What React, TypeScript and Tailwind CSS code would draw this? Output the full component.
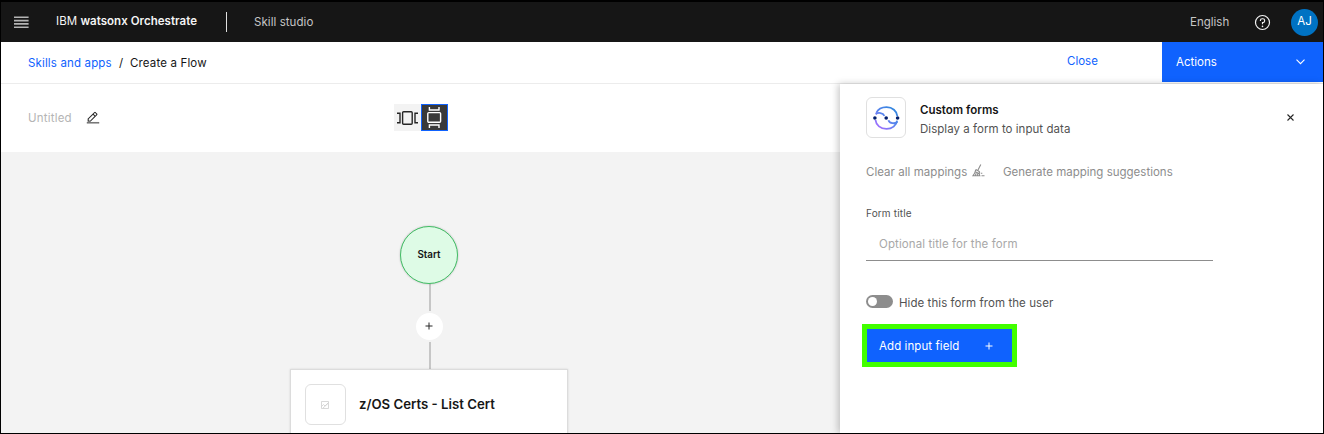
import type { ReactNode } from "react";

function Label({ className, children }: { className: string; children: ReactNode }) {
  return <span className={`block shrink-0 whitespace-nowrap leading-4 ${className}`}>{children}</span>;
}

function MenuIcon() {
  return (
    <svg className="shrink-0" width="15" height="13" viewBox="0 0 15 13" fill="none" stroke="#b4b4b4" strokeWidth="1.6">
      <path d="M0 1.3H14.6M0 4.6H14.6M0 7.9H14.6M0 11.2H14.6" />
    </svg>
  );
}

function EditIcon() {
  return (
    <svg className="shrink-0" width="14" height="14" viewBox="0 0 32 32" fill="#161616">
      <path d="M2 26h28v2H2zM25.4 9c.8-.8.8-2 0-2.8l-3.6-3.6c-.8-.8-2-.8-2.8 0l-15 15V24h6.4l15-15zM20.4 4L24 7.6l-3 3L17.4 7l3-3zM6 22v-3.6l10-10 3.6 3.6-10 10H6z" stroke="#161616" strokeWidth=".3" />
    </svg>
  );
}

function HelpIcon() {
  return (
    <svg className="shrink-0" width="17" height="17" viewBox="0 0 32 32" fill="none" stroke="#f4f4f4" strokeWidth="2.2">
      <circle cx="16" cy="16" r="13.2" />
      <path d="M12 13v-.5A3.5 3.5 0 0 1 15.5 9h1a3.6 3.6 0 0 1 0 7.2H16V19.4" />
      <circle cx="16" cy="23.3" r="1.5" fill="#f4f4f4" stroke="none" />
    </svg>
  );
}

function PlusIcon({ className }: { className: string }) {
  return (
    <svg className={className} width="8" height="8" viewBox="0 0 8 8" fill="none" stroke="currentColor">
      <path d="M4 .5v7M.5 4h7" />
    </svg>
  );
}

function FormLogo() {
  return (
    <svg className="shrink-0" width="27" height="24" viewBox="0 0 27 24" fill="none">
      <defs>
        <linearGradient id="swirl" x1="22" y1="2" x2="5" y2="22" gradientUnits="userSpaceOnUse">
          <stop offset="0" stopColor="#2f86dc" />
          <stop offset=".5" stopColor="#5a84ee" />
          <stop offset="1" stopColor="#a56eff" />
        </linearGradient>
      </defs>
      <g stroke="url(#swirl)" strokeWidth="1.8">
        <path d="M3.3 6.8C5 3.200 9 1.100 13.500 1.100c6 0 10.300 4 10.800 8.900" />
        <path d="M2.500 14c.5 5 5 8.900 11 8.900 5.500 0 10-3.400 10.600-8.300" />
        <path d="M2.600 8.200c2.400-2 7.400-1.600 8.800 1.600" />
        <path d="M24.400 15.600c-2.400 2.600-7.900 2-9-1.400" />
      </g>
      <g fill="#001d6c">
        <circle cx="1.900" cy="12" r="1.800" />
        <circle cx="13.200" cy="12" r="1.800" />
        <circle cx="24.600" cy="12" r="1.800" />
      </g>
    </svg>
  );
}

function BroomIcon() {
  return (
    <svg className="shrink-0" width="13" height="13" viewBox="0 0 13 13" fill="none" stroke="#8d8d8d" strokeWidth="1.1">
      <path d="M8.800.600 6 6M3.800 5.600l3.900 2.200M3.800 5.600C3.300 8.200 2.300 10.200.9 11.800h6.900C7.200 10.500 7.200 9 7.700 7.800M3.300 11.500l1-2.200M5.500 11.500l.3-2M3.700 8l3.300 1.600M8.800 9.300h1.500M9.500 11.800h3" />
    </svg>
  );
}

function Header() {
  return (
    <header className="flex h-10 shrink-0 items-center bg-[#161616] pl-[13px] pr-[5px] text-[#f4f4f4]">
      <MenuIcon />
      <Label className="-mt-0.5 ml-[27px] w-[170px] text-[11.5px] tracking-[0.04px]">
        IBM <b className="font-semibold">watsonx Orchestrate</b>
      </Label>
      <div className="h-5 w-px bg-[#e0e0e0]" />
      <Label className="ml-[27px] text-[11.5px] tracking-[0.06px] text-[#c6c6c6]">Skill studio</Label>
      <div className="ml-auto flex items-center">
        <Label className="w-16 text-[11.5px] text-[#c6c6c6]">English</Label>
        <HelpIcon />
        <div className="ml-5 flex h-[27px] w-[27px] items-center justify-center rounded-full bg-[#0072c3] text-[11.5px] text-white">AJ</div>
      </div>
    </header>
  );
}

function Breadcrumbs() {
  return (
    <nav className="flex h-[42px] shrink-0 items-start border-b border-[#ececec] bg-white pl-[27px]">
      <Label className="mt-[13px] w-[91px] text-[11.5px] tracking-[0.15px] text-[#0f62fe]">Skills and apps</Label>
      <Label className="mt-[13px] w-[11px] text-[11.5px] text-[#161616]">/</Label>
      <Label className="mt-[13px] text-[11.5px] tracking-[0.15px] text-[#161616]">Create a Flow</Label>
      <Label className="ml-auto mt-[11px] w-[95px] text-[11.5px] text-[#0f62fe]">Close</Label>
      <button className="flex h-10 w-[161px] items-center justify-between bg-[#0f62fe] pl-3.5 pr-[18px] text-white">
        <Label className="text-[11.5px]">Actions</Label>
        <svg width="9" height="6" viewBox="0 0 9 6" fill="none" stroke="white" strokeWidth="1.1">
          <path d="M.5.7 4.5 4.7 8.5.7" />
        </svg>
      </button>
    </nav>
  );
}

function Toolbar() {
  return (
    <div className="flex h-[68px] shrink-0 items-center bg-white pl-[27px]">
      <Label className="w-[58px] text-[11.5px] tracking-[0.2px] text-[#b5b5b5]">Untitled</Label>
      <EditIcon />
      <div className="mb-px ml-[294px] flex h-[27px]">
        <button className="flex h-[27px] w-[27px] items-center justify-center bg-[#f3f3f3]">
          <svg width="21" height="14" viewBox="0 0 21 14" fill="none" stroke="#262626" strokeWidth="1.4">
            <rect x="5.6" y=".7" width="9.6" height="12.5" rx="1" />
            <path d="M0 2.200h3v9.600H0M21 2.200h-3v9.600h3" />
          </svg>
        </button>
        <button className="h-[27px] w-[27px] bg-[#0f62fe] p-px">
          <span className="flex h-[25px] w-[25px] items-center justify-center bg-[#393939]">
            <svg width="15" height="21" viewBox="0 0 15 21" fill="none" stroke="white" strokeWidth="1.4">
              <rect x=".8" y="5.600" width="12.800" height="9.600" rx="1" />
              <path d="M2.400 0v3h9.600V0M2.400 21v-3h9.600v3" />
            </svg>
          </span>
        </button>
      </div>
    </div>
  );
}

function Canvas() {
  return (
    <div className="relative min-h-0 flex-1 overflow-hidden bg-[#f3f3f3]">
      <div className="absolute left-[428px] top-[131px] h-7 w-0.5 bg-[#c6c6c6]" />
      <div className="absolute left-[428px] top-[190px] h-7 w-0.5 bg-[#c6c6c6]" />
      <div className="absolute left-[399px] top-[74px] flex h-[58px] w-[58px] items-center justify-center rounded-full border border-[#42be65] bg-[#defbe6] shadow-[0_0_2px_rgba(0,0,0,0.25)]">
        <Label className="-mt-px text-[9.8px] font-semibold text-[#161616]">Start</Label>
      </div>
      <div className="absolute left-[415px] top-[161px] flex h-[27px] w-[27px] items-center justify-center rounded-full bg-white">
        <PlusIcon className="-ml-0.5 -mt-px text-[#262626]" />
      </div>
      <div className="absolute left-[289px] top-[217px] flex h-24 w-[278px] items-start border border-[#dcdcdc] bg-white pl-3.5 pt-3.5 shadow-[0_0_2px_rgba(0,0,0,0.12)]">
        <div className="flex h-[41px] w-[41px] items-center justify-center rounded-md border border-[#e0e0e0]">
          <svg className="-ml-px" width="8" height="8" viewBox="0 0 8 8" fill="none" stroke="#cfcfcf" strokeWidth=".8">
            <path d="M.5.5h7v7h-7zM.5 5.5l2-2 1.500 1.500L7.500 1.500M2 7l5-4.500" />
          </svg>
        </div>
        <Label className="ml-[13px] mt-3 text-[13.2px] font-semibold text-[#161616]">z/OS Certs - List Cert</Label>
      </div>
    </div>
  );
}

function FormPanel() {
  return (
    <aside className="z-10 flex w-[483px] shrink-0 flex-col bg-white pl-[26px] shadow-[-2px_0_7px_rgba(0,0,0,0.22)]">
      <div className="mt-[13px] flex h-[41px]">
        <div className="flex h-[41px] w-10 items-center justify-center rounded-md border border-[#e0e0e0]">
          <FormLogo />
        </div>
        <div className="ml-3.5 mt-[5px] flex flex-col gap-[3px]">
          <Label className="text-[11.5px] font-semibold text-[#161616]">Custom forms</Label>
          <Label className="text-[11.5px] tracking-[0.04px] text-[#525252]">Display a form to input data</Label>
        </div>
        <svg className="ml-auto mr-[29px] mt-[17px]" width="7" height="7" viewBox="0 0 7 7" fill="none" stroke="#262626" strokeWidth="1.1">
          <path d="M.5.5l6 6M6.500.500l-6 6" />
        </svg>
      </div>
      <div className="mt-[26px] flex h-4">
        <Label className="w-[106px] text-[11.5px] tracking-[0.04px] text-[#8d8d8d]">Clear all mappings</Label>
        <BroomIcon />
        <Label className="ml-[18px] text-[11.5px] text-[#8d8d8d]">Generate mapping suggestions</Label>
      </div>
      <Label className="mt-[25px] text-[10px] tracking-[0.15px] text-[#525252]">Form title</Label>
      <div className="mt-3.5 flex h-[26px] w-[347px] border-b border-[#8d8d8d] pl-[13px]">
        <Label className="mt-px text-[11.5px] tracking-[0.1px] text-[#a8a8a8]">Optional title for the form</Label>
      </div>
      <div className="mt-[34px] flex h-4">
        <div className="h-[13px] w-[27px] rounded-full bg-[#8d8d8d] p-0.5">
          <div className="h-[9px] w-[9px] rounded-full bg-white" />
        </div>
        <Label className="ml-1.5 text-[11.5px] tracking-[0.06px] text-[#525252]">Hide this form from the user</Label>
      </div>
      <button className="-ml-1 mt-[13px] flex h-[43px] w-[155px] items-center border-[5px] border-[#42ff00] bg-[#0f62fe] pl-3 text-white">
        <Label className="w-[106px] text-left text-[11.5px] tracking-[0.08px]">Add input field</Label>
        <PlusIcon className="" />
      </button>
    </aside>
  );
}

export default function App() {
  return (
    <div className="flex h-[434px] w-[1324px] flex-col overflow-hidden border border-t-2 border-black bg-white font-['Inter',sans-serif]">
      <Header />
      <Breadcrumbs />
      <div className="flex min-h-0 flex-1">
        <main className="flex min-w-0 flex-1 flex-col">
          <Toolbar />
          <Canvas />
        </main>
        <FormPanel />
      </div>
    </div>
  );
}
